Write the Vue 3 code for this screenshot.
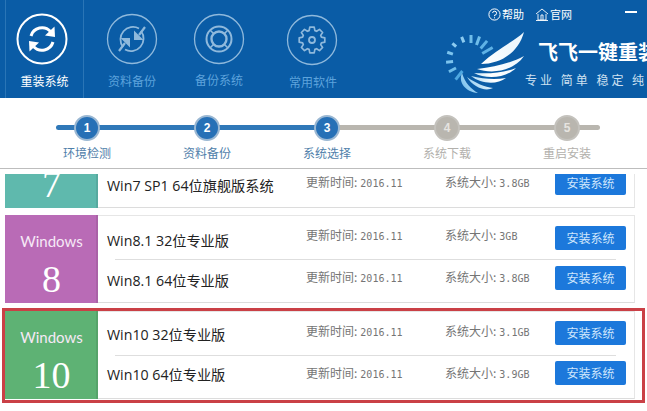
<template>
  <div class="page">
    <header class="top">
      <nav class="tabs">
        <div v-for="tab in tabs" :key="tab.label" class="tab" :class="[tab.cls, { on: tab.on }]">
          <svg class="tab-ring" width="52" height="52" viewBox="0 0 52 52">
            <circle cx="26" cy="26" r="24.5" fill="none" stroke="currentColor" :stroke-width="tab.on ? 2 : 1.3" />
            <g v-if="tab.icon === 'sync'" fill="none" stroke="currentColor" stroke-width="3">
              <path d="M15 23 A11.5 11.5 0 0 1 34.5 18.5" />
              <path d="M37 29 A11.5 11.5 0 0 1 17.5 33.5" />
              <path d="M38.5 13.5 L39 24 L29 22.5 Z" fill="currentColor" stroke="none" />
              <path d="M13.5 38.5 L13 28 L23 29.5 Z" fill="currentColor" stroke="none" />
            </g>
            <g v-if="tab.icon === 'swap'" fill="none" stroke="currentColor" stroke-width="1.8">
              <path d="M17 34 A12.5 12.5 0 0 1 33 15.5" />
              <path d="M35 18 A12.5 12.5 0 0 1 19 36.5" />
              <path d="M28 27 L28 17.5 L37.5 27 Z" fill="currentColor" stroke="none" />
              <path d="M24 25 L24 34.5 L14.5 25 Z" fill="currentColor" stroke="none" />
              <path d="M33 22 L39 14 M19 30 L13 38" stroke-width="2.2" />
            </g>
            <g v-if="tab.icon === 'buoy'" fill="none" stroke="currentColor">
              <circle cx="26" cy="26" r="12.5" stroke-width="2" />
              <circle cx="26" cy="26" r="7.5" stroke-width="2.4" />
              <path d="M17 17 L21 21 M35 17 L31 21 M17 35 L21 31 M35 35 L31 31" stroke-width="1.6" />
            </g>
            <g v-if="tab.icon === 'gear'" fill="none" stroke="currentColor" stroke-width="1.7">
              <path :d="gearPath" stroke-linejoin="round" />
              <circle cx="26" cy="26" r="3" stroke-width="1.8" />
            </g>
          </svg>
          <span class="tab-label">{{ tab.label }}</span>
        </div>
      </nav>

      <div class="brand">
        <div class="links">
          <span class="link">
            <svg width="13" height="13" viewBox="0 0 13 13">
              <circle cx="6.5" cy="6.5" r="5.6" fill="none" stroke="currentColor" />
              <path d="M4.6 5 A2 2 0 1 1 6.5 7.2 V8.2 M6.5 9.3 V10.3" fill="none" stroke="currentColor" />
            </svg>帮助
          </span>
          <span class="link">
            <svg width="14" height="13" viewBox="0 0 14 13">
              <path d="M1 6 L7 1 L13 6 M3 6 V12 H11 V6 M6 12 V7 H8 V12 M1 12.5 H13" fill="none" stroke="currentColor" stroke-width="0.9" />
            </svg>官网
          </span>
          <i class="dash"></i>
        </div>
        <div class="logo-row">
          <svg class="wing" width="87" height="64" viewBox="0 0 87 64">
            <defs>
              <linearGradient id="feather" gradientUnits="userSpaceOnUse" x1="20" y1="58" x2="70" y2="20">
                <stop offset="0" stop-color="#6dbcec" />
                <stop offset="0.5" stop-color="#ffffff" />
                <stop offset="1" stop-color="#eef7fd" />
              </linearGradient>
            </defs>
            <line
              v-for="t in ticks"
              :key="t.a"
              x1="30" y1="4" x2="30" :y2="t.end"
              :stroke="t.c"
              stroke-width="3"
              :transform="`rotate(${t.a} 30 29)`"
            />
            <g fill="url(#feather)">
              <path d="M83 1 C74 10 56 18 40 33 C58 33 77 23 83 1 Z" />
              <path d="M83 25 C70 32 54 36 36 38 C50 43 72 41 83 25 Z" />
              <path d="M75 37 C62 42 48 43 33 42 C44 48 64 48 75 37 Z" />
              <path d="M65 47 C54 49 42 48 30 45 C40 53 56 54 65 47 Z" />
              <path d="M52 57 C44 56 34 52 26 46 C32 56 44 61 52 57 Z" />
              <path d="M37 62 C30 58 24 52 21 42 C17 51 24 61 37 62 Z" />
            </g>
          </svg>
          <div class="logo-text">
            <div class="logo-name">飞飞一键重装</div>
            <div class="logo-slogan">专业 简单 稳定 纯净</div>
          </div>
        </div>
      </div>
    </header>

    <section class="stepper">
      <div class="track"></div>
      <div v-for="(step, i) in steps" :key="step.label" class="step" :class="{ done: step.done }">
        <span class="node">{{ i + 1 }}</span>
        <span class="step-label">{{ step.label }}</span>
      </div>
    </section>

    <section class="viewport">
      <div class="cards">
        <article v-for="g in groups" :key="g.num" class="card" :class="{ marked: g.marked }">
          <div class="tile" :style="{ background: g.color }">
            <span class="tile-name">Windows</span>
            <span class="tile-num">{{ g.num }}</span>
          </div>
          <div class="rows">
            <div v-for="r in g.rows" :key="r.name" class="row">
              <span class="name">{{ r.name }}</span>
              <span class="meta">更新时间:<em>2016.11</em></span>
              <span class="meta">系统大小:<em>{{ r.size }}</em></span>
              <button class="install">安装系统</button>
            </div>
          </div>
          <div v-if="g.marked" class="redbox"></div>
        </article>
      </div>
    </section>
  </div>
</template>

<script setup>
const tabs = [
  { label: '重装系统', icon: 'sync', on: true, cls: 't1' },
  { label: '资料备份', icon: 'swap', cls: 't2' },
  { label: '备份系统', icon: 'buoy', cls: 't3' },
  { label: '常用软件', icon: 'gear', cls: 't4' },
]

const steps = [
  { label: '环境检测', done: true },
  { label: '资料备份', done: true },
  { label: '系统选择', done: true },
  { label: '系统下载' },
  { label: '重启安装' },
]

const groups = [
  {
    num: 7,
    color: '#5fb9ad',
    rows: [
      { name: 'Win7 SP1 32位旗舰版系统', size: '3.1GB' },
      { name: 'Win7 SP1 64位旗舰版系统', size: '3.8GB' },
    ],
  },
  {
    num: 8,
    color: '#b96bb6',
    rows: [
      { name: 'Win8.1 32位专业版', size: '3GB' },
      { name: 'Win8.1 64位专业版', size: '3.8GB' },
    ],
  },
  {
    num: 10,
    color: '#5eb274',
    marked: true,
    rows: [
      { name: 'Win10 32位专业版', size: '3.1GB' },
      { name: 'Win10 64位专业版', size: '3.9GB' },
    ],
  },
]

// blades of the swirl behind the wing, angle from straight up
const ticks = [
  { a: 0, end: 12, c: '#6fbdea' },
  { a: 20, end: 13, c: '#6fbdea' },
  { a: 40, end: 14, c: '#5fb2e6' },
  { a: 60, end: 16, c: '#5fb2e6' },
  { a: -22, end: 10, c: '#8ccbf0' },
  { a: -48, end: 9, c: '#8ccbf0' },
  { a: -72, end: 10, c: '#7cc4ee' },
  { a: -95, end: 11, c: '#7cc4ee' },
  { a: -118, end: 12, c: '#6fbdea' },
  { a: -142, end: 15, c: '#4da7e0' },
]

// 8 tooth gear outline
const gearPath = (() => {
  const pts = []
  for (let i = 0; i < 8; i++) {
    const c = (i * Math.PI) / 4
    for (const [off, r] of [[-0.3, 9.8], [-0.17, 13], [0.17, 13], [0.3, 9.8]]) {
      const a = c + off
      pts.push(`${(26 + r * Math.cos(a)).toFixed(1)} ${(26 + r * Math.sin(a)).toFixed(1)}`)
    }
  }
  return `M${pts.join(' L')} Z`
})()
</script>

<style scoped>
.page {
  width: 647px;
  height: 411px;
  overflow: hidden;
  display: flex;
  flex-direction: column;
  background: #fff;
  font-family: "Noto Sans CJK SC", "Liberation Sans", sans-serif;
}

.top {
  height: 98px;
  flex: none;
  display: flex;
  justify-content: space-between;
  padding-left: 5px;
  box-sizing: border-box;
  background: #0a5ca6;
  color: #fff;
  overflow: hidden;
}

.tabs {
  display: flex;
}

.tab {
  display: flex;
  flex-direction: column;
  align-items: center;
  box-sizing: border-box;
  padding-top: 13px;
  color: #8fb9dc;
}

.tab.on {
  color: #fff;
}

.t1 {
  width: 79px;
  border-left: 1px solid #2a75b6;
  border-right: 1px solid #2a75b6;
}

.t1 .tab-ring {
  margin-left: -5px;
}

.t2 {
  width: 96px;
}

.t3 {
  width: 78px;
}

.t4 {
  width: 108px;
  padding-top: 14px;
}

.tab-label {
  margin-top: 7px;
  font-size: 12px;
  line-height: 18px;
  color: #5da3dc;
}

.on .tab-label {
  margin-left: 0;
  color: #fff;
}

.t3 .tab-label {
  margin-top: 6px;
}

.t4 .tab-label {
  margin-left: 2px;
}

.brand {
  width: 207px;
  flex: none;
  display: flex;
  flex-direction: column;
}

.links {
  height: 29px;
  display: flex;
  justify-content: flex-end;
  align-items: center;
  padding: 0 10px 1px 0;
  box-sizing: border-box;
  font-size: 11px;
}

.link {
  display: flex;
  align-items: center;
  gap: 1px;
  margin-right: 11px;
}

.dash {
  width: 12px;
  height: 2px;
  margin: 0 0 5px 42px;
  background: #fff;
}

.logo-row {
  display: flex;
  margin-top: 2px;
}

.wing {
  flex: none;
  margin-left: 1px;
}

.logo-text {
  flex: none;
  margin-left: -3px;
  white-space: nowrap;
}

.logo-name {
  margin: 8px 0 0 13px;
  font-size: 20px;
  font-weight: 700;
  line-height: 26px;
}

.logo-slogan {
  margin-top: 7px;
  font-size: 12px;
  line-height: 16px;
  letter-spacing: 3px;
  color: #cfe1f1;
}

.stepper {
  position: relative;
  height: 71px;
  flex: none;
  display: flex;
  box-sizing: border-box;
  padding-left: 27px;
  border-bottom: 1px solid #bdbdbd;
}

.track {
  position: absolute;
  left: 56px;
  top: 27px;
  width: 544px;
  height: 5px;
  border-radius: 3px;
  background: linear-gradient(to right, #2f78b8 50%, #b9b6af 50%);
}

.step {
  position: relative;
  width: 120px;
  display: flex;
  flex-direction: column;
  align-items: center;
  padding-top: 17px;
  color: #b2b0ac;
}

.step.done {
  color: #4f80aa;
}

.node {
  width: 22px;
  height: 22px;
  border: 2px solid #c4c2bd;
  border-radius: 50%;
  background: #b9b6af;
  color: #e6e4e0;
  font: 700 12px/22px "Liberation Sans", sans-serif;
  text-align: center;
}

.done .node {
  border-color: #9bb8d3;
  background: #2670b6;
  color: #fff;
}

.step-label {
  margin-top: 3px;
  font-size: 12px;
  line-height: 18px;
}

.viewport {
  height: 237px;
  margin-top: 5px;
  overflow: hidden;
}

.cards {
  display: flex;
  flex-direction: column;
  gap: 7px;
  margin-top: -54px;
  padding-left: 5px;
}

.card {
  position: relative;
  width: 630px;
  height: 88px;
  box-sizing: border-box;
  flex: none;
  display: flex;
  border-right: 1px solid #e6e6e6;
  border-bottom: 1px solid #dcdcdc;
  border-top: 1px solid #e6e6e6;
}

.card.marked {
  margin-top: 1px;
}

.tile {
  width: 93px;
  height: 88px;
  margin: -1px 0;
  flex: none;
  display: flex;
  flex-direction: column;
  align-items: center;
  color: #f6e9f6;
  box-shadow: inset -2px 0 0 rgba(0, 0, 0, 0.08);
}

.tile-name {
  margin-top: 15px;
  font: 15px/22px Lato, "Liberation Sans", sans-serif;
}

.tile-num {
  margin-top: 5px;
  font: 38px/44px "Liberation Serif", serif;
  color: #fff;
}

.rows {
  flex: 1;
  display: flex;
  flex-direction: column;
  margin-top: -1px;
}

.row {
  position: relative;
  height: 44px;
  display: grid;
  grid-template-columns: 199px 139px 110px 71px;
  align-items: start;
  box-sizing: border-box;
  padding-left: 9px;
}

.row + .row::before {
  content: "";
  position: absolute;
  top: 0;
  left: 17px;
  width: 501px;
  height: 1px;
  background: #dedede;
}

.name {
  margin-top: 16px;
  font-size: 14.2px;
  line-height: 20px;
  color: #222;
  white-space: nowrap;
  font-family: "Open Sans", "Noto Sans CJK SC", sans-serif;
}

.row + .row .name {
  margin-top: 12px;
}

.marked .name {
  margin-top: 14px;
}

.marked .row + .row .name {
  margin-top: 10px;
}

.meta {
  margin-top: 10px;
  font-size: 12px;
  line-height: 20px;
  color: #757575;
  white-space: nowrap;
}

.row + .row .meta {
  margin-top: 8px;
}

.meta em {
  margin-left: 3px;
  font: normal 10px/20px "DejaVu Sans Mono", monospace;
}

.install {
  width: 71px;
  height: 24px;
  margin-top: 11px;
  padding: 0;
  border: 0;
  border-radius: 2px;
  background: #1c78db;
  color: #cfe6fb;
  font: 12px/24px "Noto Sans CJK SC", sans-serif;
}

.row + .row .install {
  margin-top: 7px;
}

.marked .install {
  margin-top: 10px;
}

.marked .row + .row .install {
  margin-top: 6px;
}

.redbox {
  position: absolute;
  top: -4px;
  left: -3px;
  right: -11px;
  bottom: -5px;
  border: 3px solid #ca4046;
  pointer-events: none;
}
</style>
